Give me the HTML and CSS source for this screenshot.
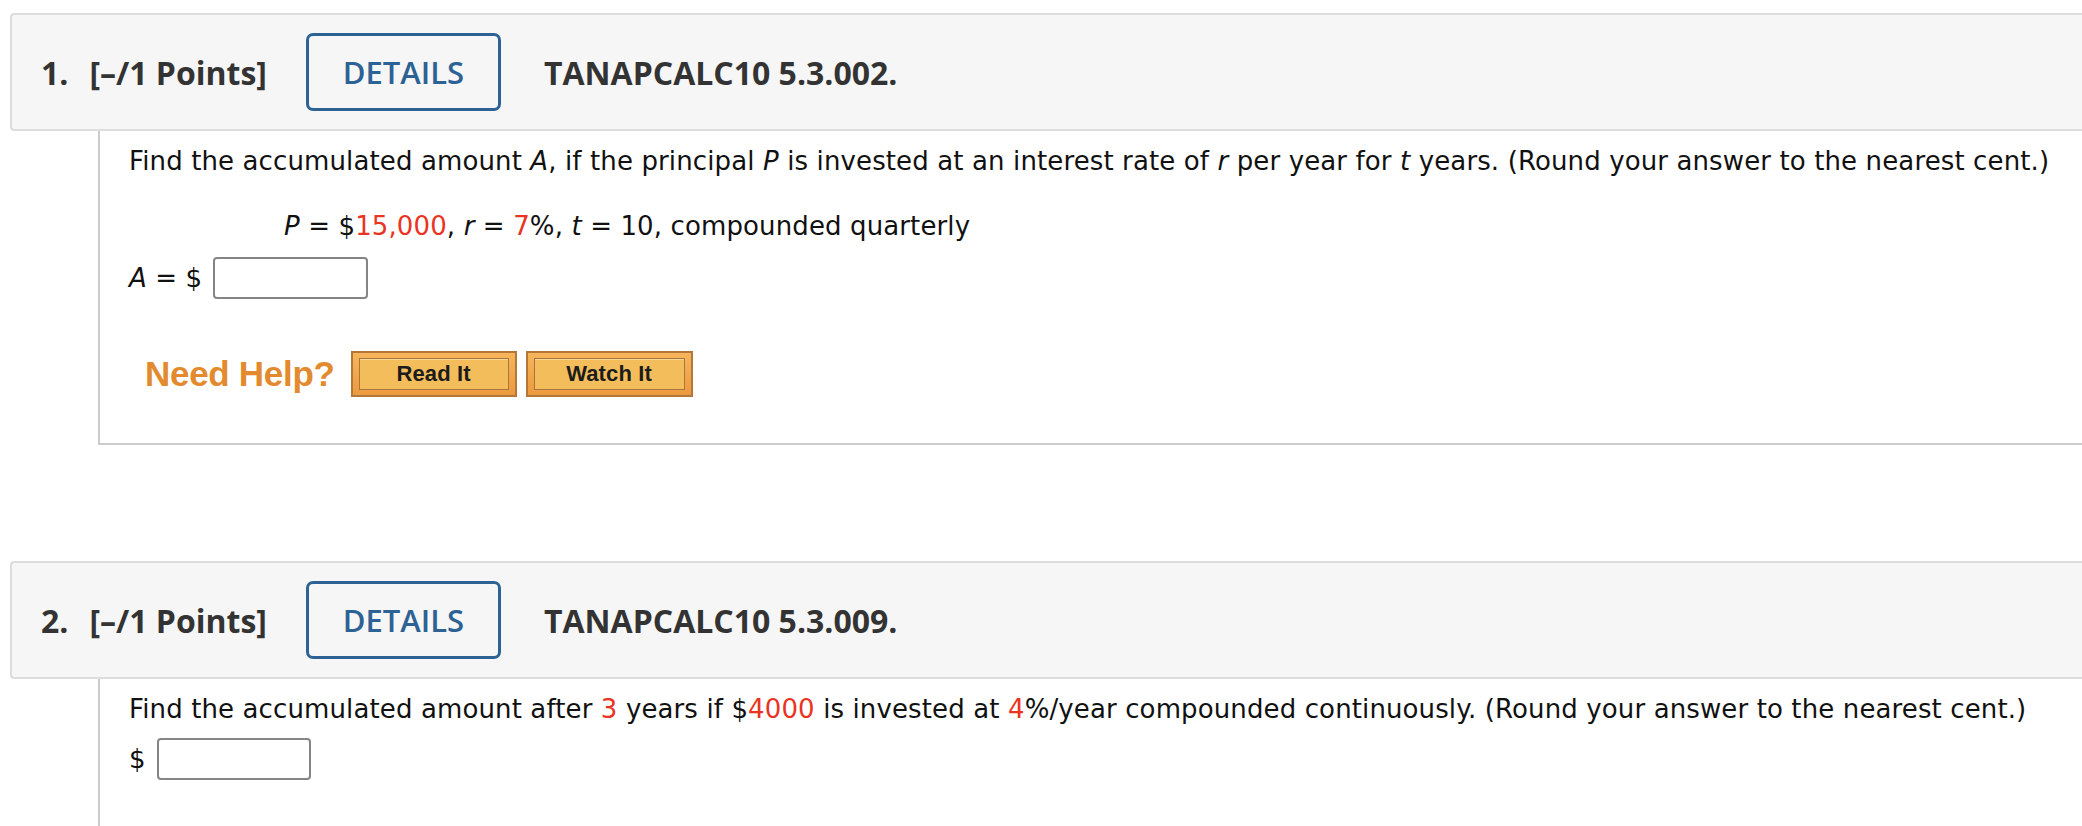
FILE: index.html
```html
<!DOCTYPE html>
<html lang="en">
<head>
<meta charset="utf-8">
<title>Questions</title>
<link rel="stylesheet" href="styles.css">
</head>
<body>
<div class="page">
  <section class="question q1">
    <div class="q-header">
      <span class="q-num">1.</span>
      <span class="q-points">[–/1 Points]</span>
      <span class="details-btn">DETAILS</span>
      <span class="q-code">TANAPCALC10 5.3.002.</span>
    </div>
    <div class="q-body">
      <p class="q-text">Find the accumulated amount <i>A</i>, if the principal <i>P</i> is invested at an interest rate of <i>r</i> per year for <i>t</i> years. (Round your answer to the nearest cent.)</p>
      <p class="q-given"><i>P</i> = $<span class="red">15,000</span>, <i>r</i> = <span class="red">7</span>%, <i>t</i> = 10, compounded quarterly</p>
      <div class="answer-row"><span class="answer-label"><i>A</i> = $</span><input class="answer" type="text"></div>
      <div class="help-row">
        <span class="need-help">Need Help?</span>
        <span class="help-btn"><span class="help-btn-inner">Read It</span></span>
        <span class="help-btn"><span class="help-btn-inner">Watch It</span></span>
      </div>
    </div>
  </section>

  <section class="question q2">
    <div class="q-header">
      <span class="q-num">2.</span>
      <span class="q-points">[–/1 Points]</span>
      <span class="details-btn">DETAILS</span>
      <span class="q-code">TANAPCALC10 5.3.009.</span>
    </div>
    <div class="q-body q-body-open">
      <p class="q-text">Find the accumulated amount after <span class="red">3</span> years if $<span class="red">4000</span> is invested at <span class="red">4</span>%/year compounded continuously. (Round your answer to the nearest cent.)</p>
      <div class="answer-row answer-row-2"><span class="answer-label">$</span><input class="answer answer-2" type="text"></div>
    </div>
  </section>
</div>
</body>
</html>
```

FILE: styles.css
```css
html, body {
  margin: 0;
  padding: 0;
  background: #ffffff;
  overflow: hidden;
}

.page {
  padding: 13px 0 0 10px;
}

.question + .question {
  margin-top: 116px;
}

.q-header {
  display: flex;
  align-items: center;
  height: 114px;
  background: #f6f6f6;
  border: 2px solid #dddddd;
  border-right: none;
  border-radius: 4px 0 0 4px;
  padding-left: 29px;
  font-family: "Open Sans", sans-serif;
  font-size: 32px;
  color: #333333;
}

.q-num {
  font-weight: 700;
}

.q-points {
  font-weight: 700;
  margin-left: 21px;
}

.details-btn {
  margin-left: 39px;
  width: 189px;
  height: 72px;
  border: 3px solid #2c6294;
  border-radius: 7px;
  display: flex;
  align-items: center;
  justify-content: center;
  color: #2c6294;
  font-weight: 600;
  font-size: 31px;
  box-sizing: content-box;
}

.q-code {
  margin-left: 43px;
  font-weight: 700;
}

.q-body {
  margin-left: 88px;
  border-left: 2px solid #cccccc;
  border-bottom: 2px solid #cccccc;
  padding: 12px 0 46px 29px;
  font-family: "DejaVu Sans", Verdana, sans-serif;
  font-size: 26px;
  letter-spacing: 0.12px;
  color: #111111;
}

.q-body-open {
  border-bottom: none;
  padding-bottom: 80px;
}

.q-body p {
  margin: 0;
  line-height: 36px;
  white-space: nowrap;
}

.q-given {
  margin-top: 29px !important;
  margin-left: 155px !important;
}

.red {
  color: #ea3323;
}

.answer-row {
  display: flex;
  align-items: center;
  margin-top: 13px;
  line-height: 36px;
}

.answer-row-2 {
  margin-top: 11px;
}

.answer-label {
  margin-right: 11px;
}

.answer {
  width: 151px;
  height: 38px;
  border: 2px solid #858585;
  border-radius: 4px;
  padding: 0;
  margin: 0;
  background: #ffffff;
  box-sizing: content-box;
}

.answer-2 {
  width: 150px;
}

.help-row {
  display: flex;
  align-items: center;
  margin-top: 52px;
  padding-left: 16px;
  font-family: "Liberation Sans", Arial, sans-serif;
}

.need-help {
  color: #e38a2f;
  font-weight: 700;
  font-size: 35px;
  letter-spacing: -0.3px;
  margin-right: 16px;
}

.help-btn {
  display: flex;
  width: 166px;
  height: 46px;
  border: 2px solid #b3773a;
  background: linear-gradient(#f7b55c, #ec9a3e);
  padding: 5px 6px;
  box-sizing: border-box;
  margin-right: 9px;
}

.help-btn-inner {
  flex: 1;
  display: flex;
  align-items: center;
  justify-content: center;
  border: 1px solid #a8763f;
  background: #f3bd5b;
  box-shadow: inset 0 1px 0 #f9d68f;
  font-size: 22px;
  font-weight: 700;
  color: #1c1c1c;
}

.help-btn + .help-btn {
  width: 167px;
}
```
